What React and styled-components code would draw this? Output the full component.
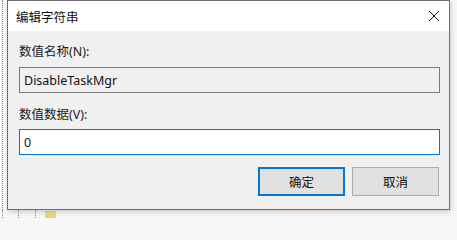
import React, { useState } from 'react'
import styled, { createGlobalStyle } from 'styled-components'

const GlobalStyle = createGlobalStyle`
  html, body {
    margin: 0;
    padding: 0;
    background: #f7f7f7;
  }
  body {
    font-family: 'Segoe UI', 'Noto Sans', 'Noto Sans CJK SC', sans-serif;
    overflow: hidden;
  }
`

const Screen = styled.div`
  position: relative;
  width: 457px;
  height: 218px;
  overflow: hidden;
  display: flex;
  flex-direction: column;
`

const TreeStrip = styled.div`
  display: flex;
  height: 210px;
`

const TreeGuide = styled.div`
  flex: none;
  box-sizing: border-box;
  border-left: 1px dotted #8a8a8a;
  margin-left: 2px;
  width: 5px;
`

const Dialog = styled.div`
  width: 443px;
  height: 210px;
  box-sizing: border-box;
  border: 1px solid #6f6f6f;
  background: #f0f0f0;
  display: flex;
  flex-direction: column;
  box-shadow: 1px 2px 5px rgba(0, 0, 0, 0.18);
`

const TitleBar = styled.div`
  height: 30px;
  flex: none;
  background: #ffffff;
  display: flex;
  align-items: center;
  justify-content: space-between;
  padding-left: 8px;
`

const Title = styled.span`
  font-family: 'Noto Sans CJK SC', sans-serif;
  font-size: 12.5px;
  color: #111;
`

const CloseButton = styled.button`
  width: 46px;
  height: 30px;
  border: none;
  background: transparent;
  display: flex;
  align-items: center;
  justify-content: center;
  padding: 0 0 0 16px;
`

const Body = styled.div`
  flex: 1;
  display: flex;
  flex-direction: column;
  padding: 13px 9px 0 11px;
`

const Label = styled.label`
  font-family: 'Noto Sans', 'Noto Sans CJK SC', sans-serif;
  font-size: 12.5px;
  line-height: 16px;
  color: #1a1a1a;
  margin-top: ${(p) => p.$top || 0}px;
`

const Field = styled.input`
  box-sizing: border-box;
  width: 421px;
  height: 26px;
  margin-top: ${(p) => p.$top || 0}px;
  padding: 0 0 0 4px;
  font-family: 'Noto Sans', sans-serif;
  font-size: 12.5px;
  color: #111;
  outline: none;
  border: 1px solid ${(p) => (p.$focused ? '#0078d7' : '#7a7a7a')};
  background: ${(p) => (p.$readOnly ? '#f0f0f0' : '#ffffff')};
`

const ButtonRow = styled.div`
  display: flex;
  justify-content: flex-end;
  gap: 7px;
  margin-top: 12px;
  padding-right: 1px;
`

const DialogButton = styled.button`
  box-sizing: border-box;
  width: 87px;
  height: 29px;
  background: #e1e1e1;
  border: ${(p) => (p.$primary ? '2px solid #0078d7' : '1px solid #adadad')};
  font-family: 'Noto Sans CJK SC', sans-serif;
  font-size: 12.5px;
  color: #111;
  padding: 0;
`

const BottomStrip = styled.div`
  height: 8px;
  display: flex;
  align-items: flex-end;
`

const DotLine = styled.div`
  width: 1px;
  height: 8px;
  border-left: 1px dotted #8a8a8a;
  margin-left: ${(p) => p.$left}px;
`

const Folder = styled.div`
  width: 11px;
  height: 6px;
  margin-left: 8px;
  background: #e8d27a;
  border-top: 1px solid #d9bd52;
`

const CloseIcon = () => (
  <svg width='12' height='12' viewBox='0 0 12 12'>
    <path d='M1 1 L11 11 M11 1 L1 11' stroke='#111' strokeWidth='1' fill='none' />
  </svg>
)

const App = () => {
  const [value, setValue] = useState('0')

  return (
    <Screen>
      <GlobalStyle />
      <TreeStrip>
        <TreeGuide />
        <Dialog>
          <TitleBar>
            <Title>编辑字符串</Title>
            <CloseButton>
              <CloseIcon />
            </CloseButton>
          </TitleBar>
          <Body>
            <Label>数值名称(N):</Label>
            <Field $top={7} $readOnly readOnly value='DisableTaskMgr' />
            <Label $top={14}>数值数据(V):</Label>
            <Field
              $top={6}
              $focused
              value={value}
              onChange={(e) => setValue(e.target.value)}
            />
            <ButtonRow>
              <DialogButton $primary>确定</DialogButton>
              <DialogButton>取消</DialogButton>
            </ButtonRow>
          </Body>
        </Dialog>
      </TreeStrip>
      <BottomStrip>
        <DotLine $left={2} />
        <DotLine $left={14} />
        <DotLine $left={15} />
        <Folder />
      </BottomStrip>
    </Screen>
  )
}

export default App
